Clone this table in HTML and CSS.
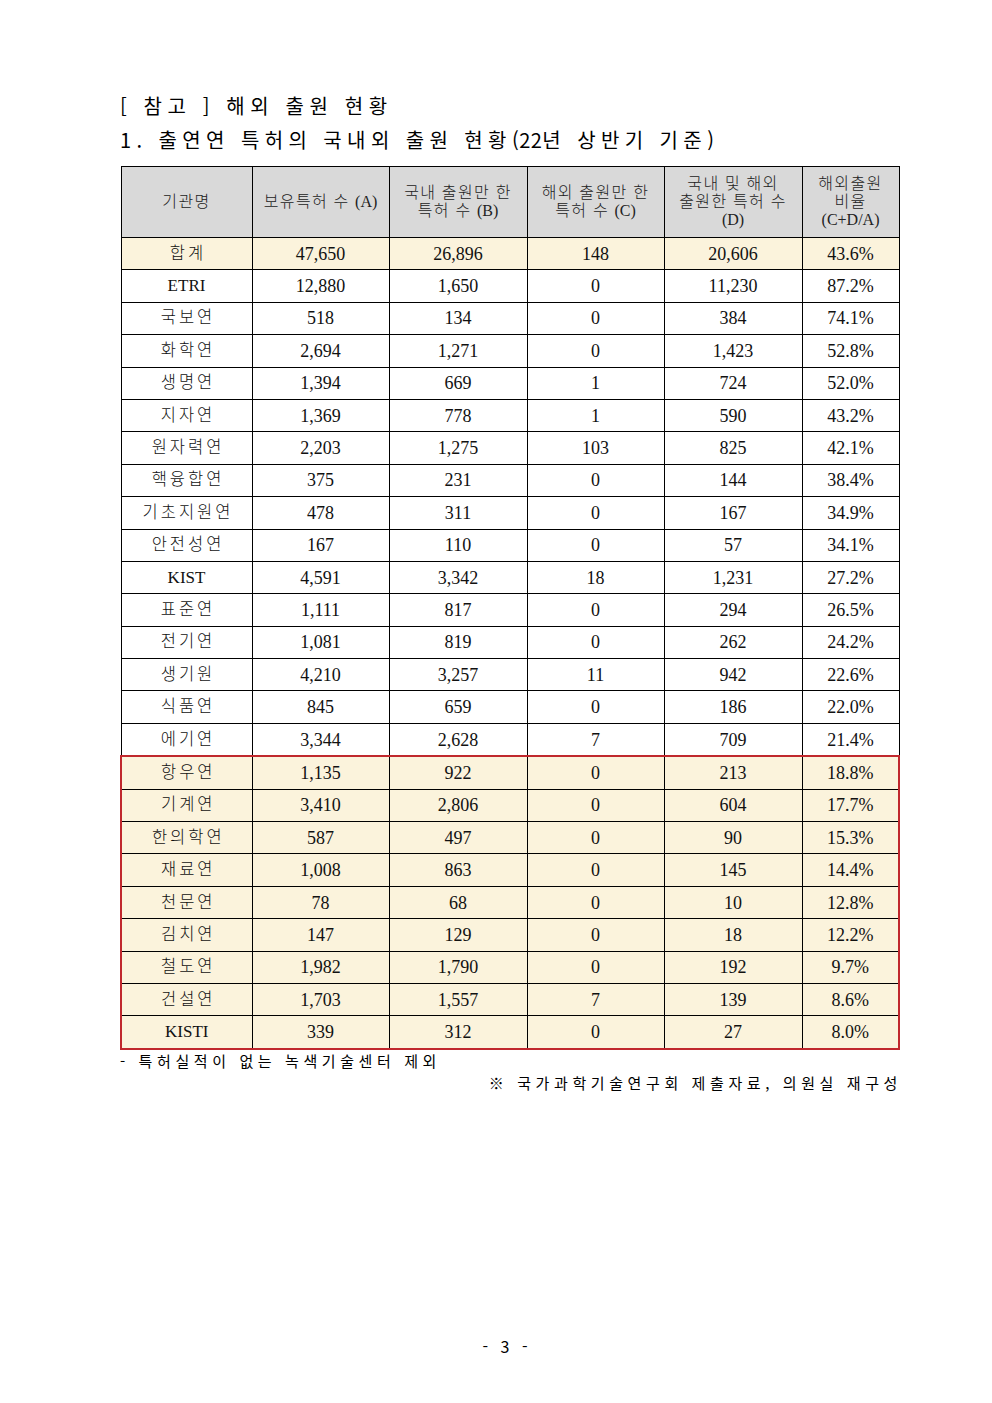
FILE: index.html
```html
<!DOCTYPE html>
<html lang="ko">
<head>
<meta charset="utf-8">
<link rel="stylesheet" href="styles.css">
</head>
<body>
<div class="page">
  <h1 class="t1">[ 참고 ] 해외 출원 현황</h1>
  <h2 class="t2">1. 출연연 특허의 국내외 출원 현황<span class="num">(22</span>년 상반기 기준)</h2>
  <table class="tbl">
    <colgroup>
      <col class="c1"><col class="c2"><col class="c3"><col class="c4"><col class="c5"><col class="c6">
    </colgroup>
    <thead>
      <tr>
        <th>기관명</th>
        <th>보유특허 수 <span class="l">(A)</span></th>
        <th>국내 출원만 한<br>특허 수 <span class="l">(B)</span></th>
        <th>해외 출원만 한<br>특허 수 <span class="l">(C)</span></th>
        <th>국내 및 해외<br>출원한 특허 수<br><span class="l">(D)</span></th>
        <th>해외출원<br>비율<br><span class="l">(C+D/A)</span></th>
      </tr>
    </thead>
    <tbody class="tot">
      <tr><td>합계</td><td>47,650</td><td>26,896</td><td>148</td><td>20,606</td><td>43.6%</td></tr>
    </tbody>
    <tbody>
      <tr><td class="en">ETRI</td><td>12,880</td><td>1,650</td><td>0</td><td>11,230</td><td>87.2%</td></tr>
      <tr><td>국보연</td><td>518</td><td>134</td><td>0</td><td>384</td><td>74.1%</td></tr>
      <tr><td>화학연</td><td>2,694</td><td>1,271</td><td>0</td><td>1,423</td><td>52.8%</td></tr>
      <tr><td>생명연</td><td>1,394</td><td>669</td><td>1</td><td>724</td><td>52.0%</td></tr>
      <tr><td>지자연</td><td>1,369</td><td>778</td><td>1</td><td>590</td><td>43.2%</td></tr>
      <tr><td>원자력연</td><td>2,203</td><td>1,275</td><td>103</td><td>825</td><td>42.1%</td></tr>
      <tr><td>핵융합연</td><td>375</td><td>231</td><td>0</td><td>144</td><td>38.4%</td></tr>
      <tr><td>기초지원연</td><td>478</td><td>311</td><td>0</td><td>167</td><td>34.9%</td></tr>
      <tr><td>안전성연</td><td>167</td><td>110</td><td>0</td><td>57</td><td>34.1%</td></tr>
      <tr><td class="en">KIST</td><td>4,591</td><td>3,342</td><td>18</td><td>1,231</td><td>27.2%</td></tr>
      <tr><td>표준연</td><td>1,111</td><td>817</td><td>0</td><td>294</td><td>26.5%</td></tr>
      <tr><td>전기연</td><td>1,081</td><td>819</td><td>0</td><td>262</td><td>24.2%</td></tr>
      <tr><td>생기원</td><td>4,210</td><td>3,257</td><td>11</td><td>942</td><td>22.6%</td></tr>
      <tr><td>식품연</td><td>845</td><td>659</td><td>0</td><td>186</td><td>22.0%</td></tr>
      <tr><td>에기연</td><td>3,344</td><td>2,628</td><td>7</td><td>709</td><td>21.4%</td></tr>
    </tbody>
    <tbody class="hl">
      <tr><td>항우연</td><td>1,135</td><td>922</td><td>0</td><td>213</td><td>18.8%</td></tr>
      <tr><td>기계연</td><td>3,410</td><td>2,806</td><td>0</td><td>604</td><td>17.7%</td></tr>
      <tr><td>한의학연</td><td>587</td><td>497</td><td>0</td><td>90</td><td>15.3%</td></tr>
      <tr><td>재료연</td><td>1,008</td><td>863</td><td>0</td><td>145</td><td>14.4%</td></tr>
      <tr><td>천문연</td><td>78</td><td>68</td><td>0</td><td>10</td><td>12.8%</td></tr>
      <tr><td>김치연</td><td>147</td><td>129</td><td>0</td><td>18</td><td>12.2%</td></tr>
      <tr><td>철도연</td><td>1,982</td><td>1,790</td><td>0</td><td>192</td><td>9.7%</td></tr>
      <tr><td>건설연</td><td>1,703</td><td>1,557</td><td>7</td><td>139</td><td>8.6%</td></tr>
      <tr><td class="en">KISTI</td><td>339</td><td>312</td><td>0</td><td>27</td><td>8.0%</td></tr>
    </tbody>
  </table>
  <p class="note">- 특허실적이 없는 녹색기술센터 제외</p>
  <p class="src">※ 국가과학기술연구회 제출자료, 의원실 재구성</p>
</div>
<div class="pnum">- 3 -</div>
</body>
</html>
```
FILE: styles.css
```css
html, body {
  margin: 0;
  padding: 0;
  background: #fff;
}
body {
  width: 992px;
  height: 1403px;
  position: relative;
  color: #000;
  font-family: "Noto Sans CJK KR", sans-serif;
}
.page {
  padding: 92px 0 0 120px;
  width: 778px;
}
.t1 {
  margin: 0;
  font-size: 20px;
  font-weight: 400;
  letter-spacing: 5.6px;
  line-height: 28px;
  height: 28px;
}
.t2 {
  margin: 6px 0 0 0;
  font-size: 20px;
  font-weight: 400;
  letter-spacing: 5.4px;
  line-height: 28px;
  height: 28px;
}
.t2 .num {
  letter-spacing: 0.5px;
}
.tbl {
  margin-top: 12px;
  width: 778px;
  border-collapse: collapse;
  table-layout: fixed;
  font-family: "Liberation Serif", "Noto Sans CJK KR", serif;
  border: 1.5px solid #000;
}
.c1 { width: 131px; }
.c2 { width: 137px; }
.c3 { width: 138px; }
.c4 { width: 137px; }
.c5 { width: 138px; }
.c6 { width: 97px; }
.tbl th {
  background: #d9d9d9;
  font-size: 16px;
  line-height: 18px;
  letter-spacing: 1.4px;
  height: 70px;
  padding: 0;
  border: 1px solid #000;
  color: #222;
  font-family: "Liberation Serif", "Noto Sans CJK KR", serif;
  font-weight: 300;
}
.tbl th .l {
  letter-spacing: 0;
}
.tbl td {
  text-align: center;
  border: 1px solid #000;
  height: 31.4px;
  padding: 0;
  font-size: 18px;
  line-height: 20px;
  color: #111;
}
.tbl td:first-child {
  font-size: 16.5px;
  font-weight: 300;
  letter-spacing: 3px;
  text-indent: 3px;
}
.tbl td.en {
  font-size: 17px;
  letter-spacing: 0;
  text-indent: 0;
}
.tot td,
.hl td {
  background: #fbf3dc;
}
.tbl tbody.hl {
  border: 2px solid #c0282d;
}
.note {
  margin: 1px 0 0 0;
  font-size: 15px;
  letter-spacing: 4.6px;
  line-height: 20px;
  font-weight: 400;
}
.src {
  margin: 2px 0 0 0;
  text-align: right;
  font-size: 15px;
  letter-spacing: 4.6px;
  line-height: 20px;
  font-weight: 400;
  margin-right: -4px;
}
.pnum {
  position: absolute;
  left: 0;
  top: 1334px;
  width: 1014px;
  text-align: center;
  font-size: 16px;
  letter-spacing: 4px;
  font-family: "Noto Sans CJK KR", sans-serif;
}
```
